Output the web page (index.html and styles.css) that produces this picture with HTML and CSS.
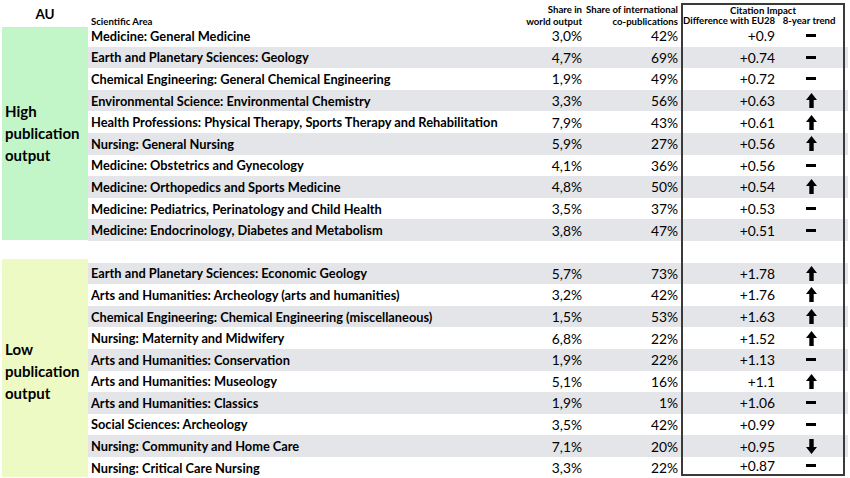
FILE: index.html
```html
<!DOCTYPE html>
<html>
<head>
<meta charset="utf-8">
<link rel="stylesheet" href="styles.css">
</head>
<body>
<svg width="0" height="0" class="defs">
  <defs>
    <symbol id="up" viewBox="0 0 11 15"><polygon points="5.5,0 11,7 7.7,7 7.7,15 3.3,15 3.3,7 0,7" fill="#000"/></symbol>
    <symbol id="down" viewBox="0 0 11 15"><polygon points="5.5,15 11,8 7.7,8 7.7,0 3.3,0 3.3,8 0,8" fill="#000"/></symbol>
  </defs>
</svg>
<div class="table">
  <div class="head">
    <div class="au">AU</div>
    <div class="hrow">
      <div class="h-area">Scientific Area</div>
      <div class="h-share">Share in<br>world output</div>
      <div class="h-intl">Share of international<br>co-publications</div>
      <div class="ci ci-top">
        <div class="h-ci-title">Citation Impact</div>
        <div class="h-ci-sub"><span class="h-diff">Difference with EU28</span><span class="h-trend">8-year trend</span></div>
      </div>
      <div class="fill"></div>
    </div>
  </div>

  <div class="group">
    <div class="label high"><span>High publication output</span></div>
    <div class="rows">
      <div class="row"><div class="area">Medicine: General Medicine</div><div class="num share">3,0%</div><div class="num intl">42%</div><div class="ci"><div class="num diff">+0.9</div><div class="trend"><span class="dash"></span></div></div><div class="fill"></div></div>
      <div class="row alt"><div class="area">Earth and Planetary Sciences: Geology</div><div class="num share">4,7%</div><div class="num intl">69%</div><div class="ci"><div class="num diff">+0.74</div><div class="trend"><span class="dash"></span></div></div><div class="fill"></div></div>
      <div class="row"><div class="area">Chemical Engineering: General Chemical Engineering</div><div class="num share">1,9%</div><div class="num intl">49%</div><div class="ci"><div class="num diff">+0.72</div><div class="trend"><span class="dash"></span></div></div><div class="fill"></div></div>
      <div class="row alt"><div class="area">Environmental Science: Environmental Chemistry</div><div class="num share">3,3%</div><div class="num intl">56%</div><div class="ci"><div class="num diff">+0.63</div><div class="trend"><svg class="arrow"><use href="#up"/></svg></div></div><div class="fill"></div></div>
      <div class="row"><div class="area">Health Professions: Physical Therapy, Sports Therapy and Rehabilitation</div><div class="num share">7,9%</div><div class="num intl">43%</div><div class="ci"><div class="num diff">+0.61</div><div class="trend"><svg class="arrow"><use href="#up"/></svg></div></div><div class="fill"></div></div>
      <div class="row alt"><div class="area">Nursing: General Nursing</div><div class="num share">5,9%</div><div class="num intl">27%</div><div class="ci"><div class="num diff">+0.56</div><div class="trend"><svg class="arrow"><use href="#up"/></svg></div></div><div class="fill"></div></div>
      <div class="row"><div class="area">Medicine: Obstetrics and Gynecology</div><div class="num share">4,1%</div><div class="num intl">36%</div><div class="ci"><div class="num diff">+0.56</div><div class="trend"><span class="dash"></span></div></div><div class="fill"></div></div>
      <div class="row alt"><div class="area">Medicine: Orthopedics and Sports Medicine</div><div class="num share">4,8%</div><div class="num intl">50%</div><div class="ci"><div class="num diff">+0.54</div><div class="trend"><svg class="arrow"><use href="#up"/></svg></div></div><div class="fill"></div></div>
      <div class="row"><div class="area">Medicine: Pediatrics, Perinatology and Child Health</div><div class="num share">3,5%</div><div class="num intl">37%</div><div class="ci"><div class="num diff">+0.53</div><div class="trend"><span class="dash"></span></div></div><div class="fill"></div></div>
      <div class="row alt"><div class="area">Medicine: Endocrinology, Diabetes and Metabolism</div><div class="num share">3,8%</div><div class="num intl">47%</div><div class="ci"><div class="num diff">+0.51</div><div class="trend"><span class="dash"></span></div></div><div class="fill"></div></div>
    </div>
  </div>

  <div class="group">
    <div class="label blank"></div>
    <div class="rows">
      <div class="row"><div class="area"></div><div class="num share"></div><div class="num intl"></div><div class="ci"><div class="num diff"></div><div class="trend"></div></div><div class="fill"></div></div>
    </div>
  </div>

  <div class="group">
    <div class="label low"><span>Low publication output</span></div>
    <div class="rows">
      <div class="row alt"><div class="area">Earth and Planetary Sciences: Economic Geology</div><div class="num share">5,7%</div><div class="num intl">73%</div><div class="ci"><div class="num diff">+1.78</div><div class="trend"><svg class="arrow"><use href="#up"/></svg></div></div><div class="fill"></div></div>
      <div class="row"><div class="area">Arts and Humanities: Archeology (arts and humanities)</div><div class="num share">3,2%</div><div class="num intl">42%</div><div class="ci"><div class="num diff">+1.76</div><div class="trend"><svg class="arrow"><use href="#up"/></svg></div></div><div class="fill"></div></div>
      <div class="row alt"><div class="area">Chemical Engineering: Chemical Engineering (miscellaneous)</div><div class="num share">1,5%</div><div class="num intl">53%</div><div class="ci"><div class="num diff">+1.63</div><div class="trend"><svg class="arrow"><use href="#up"/></svg></div></div><div class="fill"></div></div>
      <div class="row"><div class="area">Nursing: Maternity and Midwifery</div><div class="num share">6,8%</div><div class="num intl">22%</div><div class="ci"><div class="num diff">+1.52</div><div class="trend"><svg class="arrow"><use href="#up"/></svg></div></div><div class="fill"></div></div>
      <div class="row alt"><div class="area">Arts and Humanities: Conservation</div><div class="num share">1,9%</div><div class="num intl">22%</div><div class="ci"><div class="num diff">+1.13</div><div class="trend"><span class="dash"></span></div></div><div class="fill"></div></div>
      <div class="row"><div class="area">Arts and Humanities: Museology</div><div class="num share">5,1%</div><div class="num intl">16%</div><div class="ci"><div class="num diff">+1.1</div><div class="trend"><svg class="arrow"><use href="#up"/></svg></div></div><div class="fill"></div></div>
      <div class="row alt"><div class="area">Arts and Humanities: Classics</div><div class="num share">1,9%</div><div class="num intl">1%</div><div class="ci"><div class="num diff">+1.06</div><div class="trend"><span class="dash"></span></div></div><div class="fill"></div></div>
      <div class="row"><div class="area">Social Sciences: Archeology</div><div class="num share">3,5%</div><div class="num intl">42%</div><div class="ci"><div class="num diff">+0.99</div><div class="trend"><span class="dash"></span></div></div><div class="fill"></div></div>
      <div class="row alt"><div class="area">Nursing: Community and Home Care</div><div class="num share">7,1%</div><div class="num intl">20%</div><div class="ci"><div class="num diff">+0.95</div><div class="trend"><svg class="arrow"><use href="#down"/></svg></div></div><div class="fill"></div></div>
      <div class="row last"><div class="area">Nursing: Critical Care Nursing</div><div class="num share">3,3%</div><div class="num intl">22%</div><div class="ci"><div class="num diff">+0.87</div><div class="trend"><span class="dash"></span></div></div><div class="fill"></div></div>
    </div>
  </div>
</div>
</body>
</html>
```

FILE: styles.css
```css
html, body {
  margin: 0;
  padding: 0;
  background: #fff;
}
body {
  font-family: Lato, "Open Sans", sans-serif;
  color: #000;
  width: 850px;
  height: 478px;
  overflow: hidden;
}
.defs {
  position: absolute;
  width: 0;
  height: 0;
}
.table {
  padding: 0 2px;
  display: flex;
  flex-direction: column;
}
.head {
  display: flex;
  height: 25px;
}
.au {
  width: 86px;
  text-align: center;
  font-weight: 700;
  font-size: 13.5px;
  line-height: 16px;
  padding-top: 6px;
}
.hrow {
  display: flex;
  flex: 1;
  font-weight: 700;
  font-size: 9.6px;
  line-height: 12px;
  white-space: nowrap;
}
.h-area {
  width: 409px;
  padding-left: 3px;
  padding-top: 16px;
}
.h-share {
  width: 82px;
  padding-right: 3px;
  text-align: right;
  padding-top: 4px;
}
.h-intl {
  width: 93px;
  padding-right: 3px;
  text-align: right;
  padding-top: 4px;
}
.ci {
  display: flex;
  border-left: 2px solid #3a3a3a;
  border-right: 2px solid #3a3a3a;
}
.ci-top {
  flex-direction: column;
  border-top: 2px solid #3a3a3a;
  width: 160px;
  height: 20px;
  margin-top: 3px;
}
.h-ci-title {
  text-align: center;
  height: 10px;
  line-height: 11px;
}
.h-ci-sub {
  display: flex;
  line-height: 12px;
}
.h-diff {
  width: 92px;
  text-align: right;
}
.h-trend {
  width: 68px;
  text-align: center;
}
.fill {
  width: 3px;
}
.group {
  display: flex;
}
.label {
  width: 86px;
  flex: none;
  display: flex;
  align-items: center;
  font-weight: 700;
  font-size: 15px;
  line-height: 22px;
  margin: 2px 0 1px;
  box-sizing: border-box;
  padding-left: 3px;
}
.label span {
  display: block;
}
.high {
  background: #c2f6c9;
}
.low {
  background: #eefac3;
  margin-top: -4px;
}
.low span {
  margin-top: 6px;
}
.blank {
  background: transparent;
}
.rows {
  flex: 1;
  display: flex;
  flex-direction: column;
}
.row {
  display: flex;
  height: 21.6px;
  align-items: stretch;
}
.row.alt {
  background: #e4e5e9;
}
.area {
  width: 409px;
  padding-left: 3px;
  font-weight: 700;
  font-size: 12.8px;
  display: flex;
  align-items: center;
  white-space: nowrap;
}
.num {
  font-size: 13.8px;
  text-align: right;
  display: flex;
  align-items: center;
  justify-content: flex-end;
}
.share {
  width: 82px;
  padding-right: 3px;
}
.intl {
  width: 93px;
  padding-right: 3px;
}
.diff {
  width: 92px;
  padding-right: 4px;
}
.trend {
  width: 64px;
  display: flex;
  align-items: center;
  justify-content: center;
}
.dash {
  display: block;
  width: 10px;
  height: 3px;
  background: #000;
}
.arrow {
  width: 11px;
  height: 15px;
  display: block;
}
.row.last .ci {
  border-bottom: 2px solid #3a3a3a;
  height: 17px;
}
```
